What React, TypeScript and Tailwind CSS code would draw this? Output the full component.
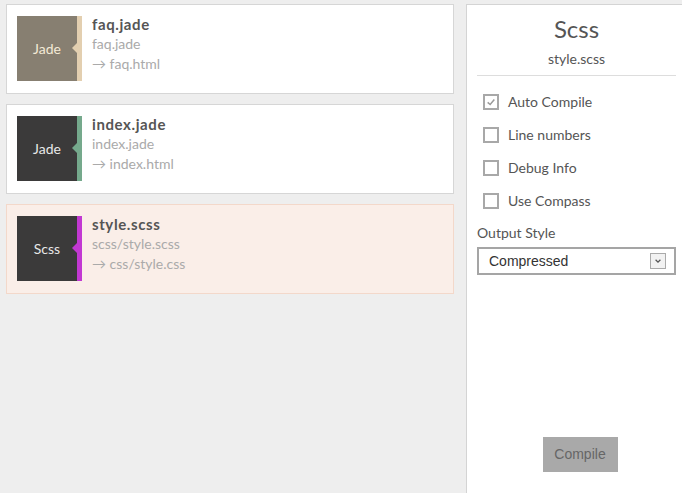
const files = [
  { name: "faq.jade", src: "faq.jade", out: "→ faq.html", label: "Jade", box: "bg-[#877f71] text-[#f4ead6]", stripe: "bg-[#e3cfb0]", tri: "border-r-[#e3cfb0]", active: false },
  { name: "index.jade", src: "index.jade", out: "→ index.html", label: "Jade", box: "bg-[#3b3a3a] text-[#e8e8e8]", stripe: "bg-[#75a98c]", tri: "border-r-[#75a98c]", active: false },
  { name: "style.scss", src: "scss/style.scss", out: "→ css/style.css", label: "Scss", box: "bg-[#3b3a3a] text-[#e8e8e8]", stripe: "bg-[#c238d2]", tri: "border-r-[#c238d2]", active: true },
]

const options = [
  { label: "Auto Compile", checked: true },
  { label: "Line numbers", checked: false },
  { label: "Debug Info", checked: false },
  { label: "Use Compass", checked: false },
]

function FileCard({ f }: { f: (typeof files)[number] }) {
  return (
    <div
      className={`flex h-[90px] border pt-[11px] pl-[10px] ${
        f.active ? "border-[#f3d8ca] bg-[#faeee8]" : "border-[#d6d6d6] bg-white"
      }`}
    >
      <div className={`flex h-[65px] w-[60px] items-center justify-center text-[14px] ${f.box}`}>
        {f.label}
      </div>
      <div className={`relative h-[65px] w-[5px] ${f.stripe}`}>
        <div className={`absolute top-[27px] -left-[5px] h-0 w-0 border-y-[5px] border-r-[5px] border-y-transparent ${f.tri}`} />
      </div>
      <div className="-mt-[2px] ml-[10px] flex flex-col text-[14px] leading-5">
        <span className="text-[15px] font-bold tracking-[0.6px] text-[#555]">{f.name}</span>
        <span className="text-[#aaa]">{f.src}</span>
        <span className="text-[#aaa]">{f.out}</span>
      </div>
    </div>
  )
}

export default function App() {
  return (
    <main className="flex h-screen gap-3 overflow-hidden bg-[#eeeeee] pt-1 pl-[6px] font-['Lato',sans-serif]">
      <section className="flex w-[448px] flex-col gap-[10px]">
        {files.map((f) => (
          <FileCard key={f.name} f={f} />
        ))}
      </section>
      <aside className="flex flex-1 flex-col border-t border-l border-[#d4d4d4] bg-white pt-2 pr-[6px] pl-[10px]">
        <h1 className="text-center text-[24px] leading-8 text-[#555]">Scss</h1>
        <p className="mt-1 border-b border-[#ddd] pb-[6px] text-center text-[14px] leading-5 text-[#555]">style.scss</p>
        <div className="flex flex-col pt-[9px]">
          {options.map((o) => (
            <label key={o.label} className="flex h-[33px] items-center pl-[6px] text-[14px] text-[#555]">
              <span className="flex h-4 w-4 items-center justify-center border-2 border-[#a8a8a8]">
                {o.checked && (
                  <svg viewBox="0 0 12 12" className="h-[10px] w-[10px]">
                    <path d="M2 6.5 L5 9 L10 3" fill="none" stroke="#9a9a9a" strokeWidth="1.8" />
                  </svg>
                )}
              </span>
              <span className="ml-[9px]">{o.label}</span>
            </label>
          ))}
        </div>
        <p className="mt-[6px] text-[14px] leading-5 text-[#555]">Output Style</p>
        <div className="mt-1 flex h-[28px] items-center justify-between border-2 border-[#a5a5a5] pr-2 pl-[10px] font-['Liberation_Sans',sans-serif] text-[14px] text-[#333]">
          <span>Compressed</span>
          <span className="flex h-4 w-4 items-center justify-center border border-[#aaa] bg-[#f2f2f2]">
            <svg viewBox="0 0 10 10" className="h-[8px] w-[8px]">
              <path d="M2 3.5 L5 6.5 L8 3.5" fill="none" stroke="#555" strokeWidth="1.6" />
            </svg>
          </span>
        </div>
        <div className="mt-auto mb-[21px] flex justify-center pl-[7px]">
          <button className="h-[35px] w-[75px] bg-[#a9a9a9] font-['Liberation_Sans',sans-serif] text-[14px] text-[#666]">
            Compile
          </button>
        </div>
      </aside>
    </main>
  )
}
